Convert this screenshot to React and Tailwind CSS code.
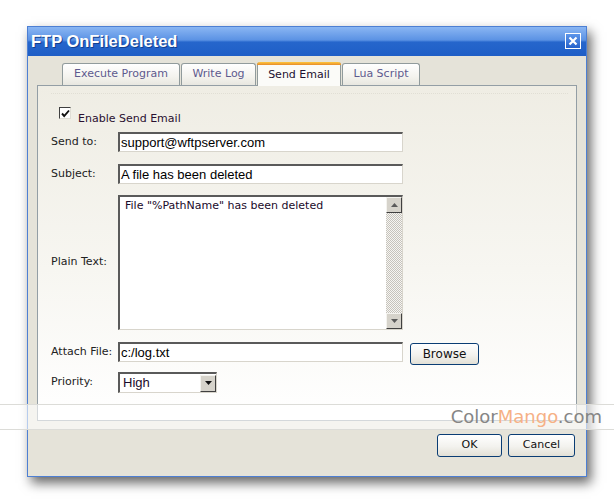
import React from 'react';

const inset = 'border-t-2 border-l-2 border-b border-r border-t-[#5a5a5a] border-l-[#5a5a5a] border-b-[#d8d5cc] border-r-[#d8d5cc] bg-white';

function Tab({ label, active, width }) {
  if (active) {
    return (
      <div
        className={`relative z-10 -mb-px h-[24px] ${width} rounded-t-[3px] border-x border-[#919b9c] bg-[#fbfbf8] flex flex-col`}
      >
        <div className="h-[3px] rounded-t-[3px] bg-[linear-gradient(to_bottom,#ffc73c,#e68b2c)] -mx-px" />
        <div className="flex-1 flex items-center justify-center text-[11px] text-[#1c1130] pb-[1px]">{label}</div>
      </div>
    );
  }
  return (
    <div
      className={`h-[22px] ${width} rounded-t-[3px] border-x border-t border-[#919b9c] bg-[linear-gradient(to_bottom,#ffffff,#f4f3ee_60%,#e8e7e0)] flex items-center justify-center text-[11px] text-[#5e5a8e]`}
    >
      {label}
    </div>
  );
}

function Arrow({ up }) {
  return (
    <div className="w-[16px] h-[16px] bg-[#d6d3cb] border border-t-[#f4f3ef] border-l-[#f4f3ef] border-b-[#404040] border-r-[#404040] flex items-center justify-center">
      <svg width="7" height="4" viewBox="0 0 7 4">
        {up ? <polygon points="0,4 7,4 3.5,0" fill="#5b5b5b" /> : <polygon points="0,0 7,0 3.5,4" fill="#5b5b5b" />}
      </svg>
    </div>
  );
}

function Row({ label, className = '', children }) {
  return (
    <div className={`flex items-center ${className}`}>
      <div className="w-[67px] text-[11px] text-[#222]">{label}</div>
      {children}
    </div>
  );
}

function XpButton({ children, className = '' }) {
  return (
    <button
      className={`rounded-[3px] border border-[#0a3d74] bg-[linear-gradient(to_bottom,#ffffff,#f3f2ee_55%,#e2e0d6)] text-[11px] text-[#111] flex items-center justify-center ${className}`}
    >
      {children}
    </button>
  );
}

export default function App() {
  return (
    <div className="relative w-[614px] h-[504px] overflow-hidden bg-white font-['DejaVu_Sans',sans-serif]">
      <div className="pt-[26px] pl-[27px]">
        <div className="w-[560px] h-[451px] border border-[#4d7fd3] bg-[#e5e3d9] shadow-[4px_6px_11px_rgba(0,0,0,0.6)] flex flex-col">
          {/* title bar */}
          <div className="h-[29px] bg-[linear-gradient(to_bottom,#8ab6f3_0%,#5b92e4_45%,#2666cc_52%,#1f5ec6_100%)] flex items-center justify-between pl-[3px] pr-[5px]">
            <span className="font-['Liberation_Sans',sans-serif] font-bold text-[16.5px] text-white [text-shadow:1px_1px_0_#12408f]">
              FTP OnFileDeleted
            </span>
            <div className="w-[16px] h-[16px] border border-white bg-[linear-gradient(to_bottom,#5d96ea,#2461cb)] flex items-center justify-center mt-[-1px]">
              <svg width="10" height="10" viewBox="0 0 10 10">
                <path d="M1.5 1.5 L8.5 8.5 M8.5 1.5 L1.5 8.5" stroke="white" strokeWidth="2.2" />
              </svg>
            </div>
          </div>

          {/* tabs */}
          <div className="mt-[6px] pl-[34px] flex items-end gap-[1px] h-[23px]">
            <Tab label="Execute Program" width="w-[118px]" />
            <Tab label="Write Log" width="w-[75px]" />
            <Tab label="Send Email" width="w-[84px]" active />
            <Tab label="Lua Script" width="w-[78px]" />
          </div>

          {/* panel */}
          <div className="mx-[9px] h-[336px] border border-[#939ea5] bg-[linear-gradient(to_bottom,#efede4,#f7f6f1_55%,#ffffff)] pl-[13px]">
            <div className="mt-[7px] mr-[8px] border-t border-dotted border-[#e0ded4]" />
            <div className="mt-[13px] flex items-start pl-[8px]">
              <div className="w-[12px] h-[12px] border border-t-[#404040] border-l-[#404040] border-b-[#e0ded6] border-r-[#e0ded6] bg-white flex items-center justify-center">
                <svg width="9" height="9" viewBox="0 0 9 9">
                  <path d="M1 4.5 L3.2 7 L8 1.5" stroke="#111" strokeWidth="1.9" fill="none" />
                </svg>
              </div>
              <span className="ml-[7px] mt-[5px] leading-[13px] text-[11px] text-[#2a1030]">Enable Send Email</span>
            </div>

            <Row label="Send to:" className="mt-[7px]">
              <div className={`w-[285px] h-[20px] ${inset} flex items-center pl-[1px] font-['Liberation_Sans',sans-serif] text-[13px] text-black`}>
                support@wftpserver.com
              </div>
            </Row>

            <Row label="Subject:" className="mt-[12px]">
              <div className={`w-[285px] h-[20px] ${inset} flex items-center pl-[1px] font-['Liberation_Sans',sans-serif] text-[13px] text-black`}>
                A file has been deleted
              </div>
            </Row>

            <Row label="Plain Text:" className="mt-[11px]">
              <div className={`w-[285px] h-[135px] ${inset} flex`}>
                <div className="flex-1 pl-[5px] pt-[2px] leading-[13px] text-[11px] text-[#1a0a2a]">
                  File "%PathName" has been deleted
                </div>
                <div className="w-[16px] flex flex-col bg-[repeating-conic-gradient(#c6c3bc_0_25%,#f6f5f2_0_50%)] bg-[length:2px_2px]">
                  <Arrow up />
                  <div className="flex-1" />
                  <Arrow />
                </div>
              </div>
            </Row>

            <div className="mt-[12px] flex items-start h-[23px]">
              <div className="w-[67px] h-[20px] flex items-center text-[11px] text-[#222]">Attach File:</div>
              <div className={`w-[285px] h-[20px] ${inset} flex items-center pl-[1px] font-['Liberation_Sans',sans-serif] text-[13px] text-black`}>
                c:/log.txt
              </div>
              <XpButton className="ml-[7px] mt-[1px] w-[69px] h-[22px] text-[12px]">Browse</XpButton>
            </div>

            <Row label="Priority:" className="mt-[7px]">
              <div className={`w-[99px] h-[21px] ${inset} flex items-center`}>
                <div className="flex-1 pl-[3px] font-['Liberation_Sans',sans-serif] text-[13px] text-[#1a0a2a]">High</div>
                <div className="w-[16px] h-[17px] bg-[#d6d3cb] border border-t-[#f4f3ef] border-l-[#f4f3ef] border-b-[#404040] border-r-[#404040] flex items-center justify-center">
                  <svg width="7" height="4" viewBox="0 0 7 4">
                    <polygon points="0,0 7,0 3.5,4" fill="#111" />
                  </svg>
                </div>
              </div>
            </Row>
          </div>

          {/* footer */}
          <div className="mt-[13px] flex justify-end gap-[6px] pr-[11px]">
            <XpButton className="w-[65px] h-[23px]">OK</XpButton>
            <XpButton className="w-[67px] h-[23px]">Cancel</XpButton>
          </div>
        </div>
      </div>

      {/* watermark band */}
      <div className="absolute left-0 top-[404px] w-full h-[26px] bg-white/60 border-y border-[#dcdcd8] flex items-center justify-end pr-[12px]">
        <span className="text-[18px] leading-none text-[#868686] pb-[1px]">
          Color<span className="text-[#f6b186]">Mango</span>.com
        </span>
      </div>
    </div>
  );
}
